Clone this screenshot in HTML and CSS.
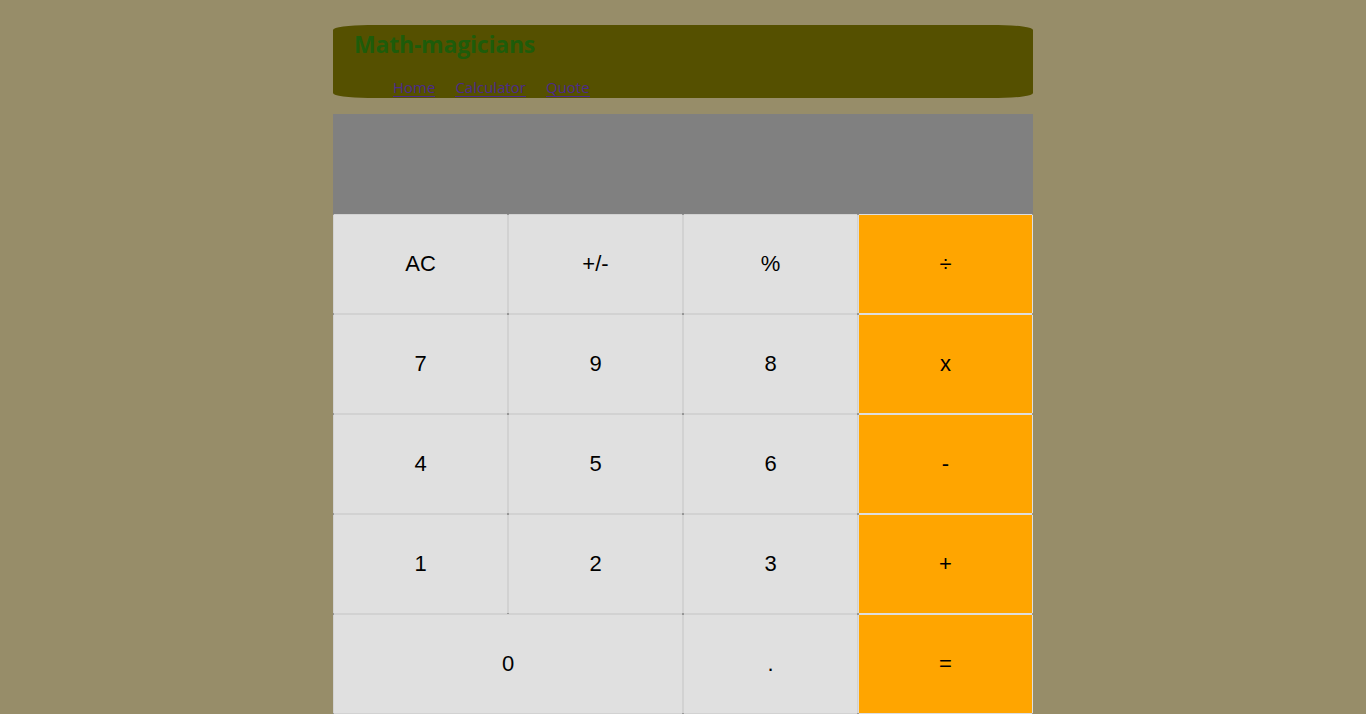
FILE: index.html
```html
<!DOCTYPE html>
<html lang="en">
<head>
<meta charset="utf-8">
<title>Math-magicians</title>
<link rel="stylesheet" href="styles.css">
</head>
<body>
<div class="app">
  <header class="header">
    <h1 class="title">Math-magicians</h1>
    <nav class="nav">
      <a href="#" class="nav-link">Home</a>
      <a href="#" class="nav-link">Calculator</a>
      <a href="#" class="nav-link">Quote</a>
    </nav>
  </header>
  <main class="calculator">
    <div class="display"></div>
    <div class="keys">
      <button class="key">AC</button>
      <button class="key">+/-</button>
      <button class="key">%</button>
      <button class="key op">÷</button>
      <button class="key">7</button>
      <button class="key">9</button>
      <button class="key">8</button>
      <button class="key op">x</button>
      <button class="key">4</button>
      <button class="key">5</button>
      <button class="key">6</button>
      <button class="key op">-</button>
      <button class="key">1</button>
      <button class="key">2</button>
      <button class="key">3</button>
      <button class="key op">+</button>
      <button class="key zero">0</button>
      <button class="key">.</button>
      <button class="key op">=</button>
    </div>
  </main>
</div>
</body>
</html>
```
FILE: styles.css
```css
html, body {
  margin: 0;
  padding: 0;
}
body {
  background: #978d69;
  font-family: "Open Sans", "Liberation Sans", sans-serif;
  overflow: hidden;
}
.app {
  width: 700px;
  margin: 25px auto 0;
  display: flex;
  flex-direction: column;
  gap: 16px;
}
.header {
  height: 73px;
  background: #555000;
  border-radius: 35px / 5px;
  display: flex;
  flex-direction: column;
  padding: 0 0 0 21px;
  box-sizing: border-box;
}
.title {
  margin: 0;
  padding-top: 3px;
  font-size: 23px;
  font-weight: 700;
  line-height: 32px;
  color: #1e5c0a;
  letter-spacing: -0.2px;
}
.nav {
  display: flex;
  align-items: flex-start;
  gap: 20px;
  padding-left: 39px;
  margin-top: 19px;
}
.nav-link {
  display: inline-block;
  font-size: 15px;
  line-height: 17px;
  color: #4b2a8c;
  text-decoration: none;
  border-bottom: 1px solid #4b2a8c;
}
.display {
  height: 100px;
  background: #808080;
}
.keys {
  display: grid;
  grid-template-columns: repeat(4, 175px);
  grid-auto-rows: 100px;
  background: #3a3a3a;
}
.key {
  margin: 0;
  padding: 0;
  background: #e0e0e0;
  border: 1px solid #d2d2d2;
  border-radius: 1px;
  font-family: "Liberation Sans", Arial, sans-serif;
  font-size: 22px;
  color: #000;
}
.key.op {
  background: #ffa500;
  border-color: #dedede;
}
.key.zero {
  grid-column: span 2;
}
```
